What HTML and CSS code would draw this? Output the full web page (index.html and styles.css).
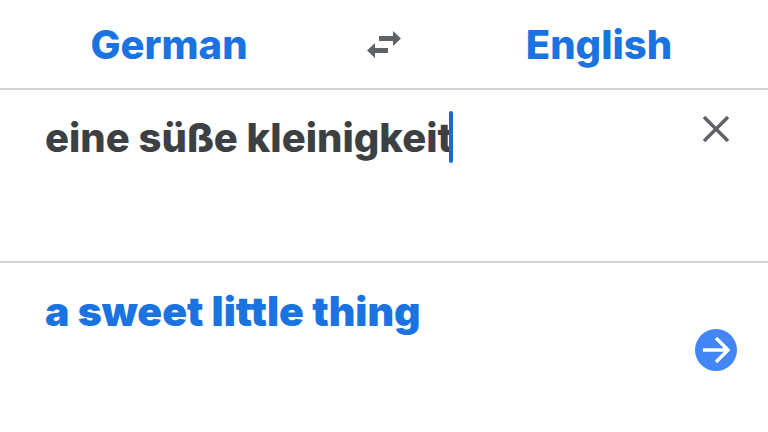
FILE: index.html
```html
<!DOCTYPE html>
<html lang="en">
<head>
  <meta charset="UTF-8">
  <meta name="viewport" content="width=device-width, initial-scale=1.0">
  <title>Translate</title>
  <link rel="stylesheet" href="styles.css">
</head>
<body>
  <header class="languages">
    <button class="language" type="button">German</button>
    <button class="icon-btn swap" type="button" aria-label="Swap languages">
      <svg width="36" height="28" viewBox="0 0 36 28">
        <path d="M27 0l8 7.500-8 7.500V10H13V5h14zM9 12v5h13v5H9v5l-8-7.500z" fill="currentColor"/>
      </svg>
    </button>
    <button class="language" type="button">English</button>
  </header>

  <main>
    <section class="source">
      <div class="source-field">
        <input class="source-text" type="text" value="eine süße kleinigkeit" aria-label="Text to translate">
        <span class="caret"></span>
      </div>
      <button class="icon-btn clear" type="button" aria-label="Clear text">
        <svg width="28" height="28" viewBox="0 0 28 28">
          <path d="M2 2l24 24M26 2L2 26" fill="none" stroke="currentColor" stroke-width="3.5"/>
        </svg>
      </button>
    </section>

    <section class="result">
      <p class="result-text">a sweet little thing</p>
      <button class="icon-btn go" type="button" aria-label="Open translation">
        <svg width="28" height="28" viewBox="0 0 28 28">
          <path d="M1 14h25M14 2l12 12-12 12" fill="none" stroke="currentColor" stroke-width="3.5"/>
        </svg>
      </button>
    </section>
  </main>
</body>
</html>
```
FILE: styles.css
```css
:root {
  --blue: #1a73e0;
  --text: #3c4043;
  --icon: #5f6368;
  --line: #d3d3d3;
}
* {
  box-sizing: border-box;
}
body {
  margin: 0;
  background: #fff;
  color: var(--text);
  font-family: Inter, "Liberation Sans", sans-serif;
  font-size: 40px;
  font-weight: 800;
  line-height: 48px;
}
button,
input {
  font: inherit;
  border: none;
  padding: 0;
  background: none;
}
button {
  cursor: pointer;
}
svg {
  display: block;
}
.languages {
  display: grid;
  grid-template-columns: 1fr 92px 1fr;
  align-items: center;
  padding: 21px 0 19px;
  border-bottom: 2px solid var(--line);
}
.language {
  color: var(--blue);
}
.icon-btn {
  display: flex;
  align-items: center;
  justify-content: center;
  flex: none;
  color: var(--icon);
}
.source,
.result {
  display: flex;
  justify-content: space-between;
  min-height: 173px;
  padding: 24px 31px 24px 45px;
}
.source {
  align-items: flex-start;
  border-bottom: 2px solid var(--line);
}
.source-field {
  position: relative;
  min-width: 0;
}
.source-text {
  display: block;
  field-sizing: content;
  max-width: 100%;
  height: 48px;
  color: var(--text);
  caret-color: transparent;
  outline: none;
}
.caret {
  position: absolute;
  top: -3px;
  right: 0;
  width: 4px;
  height: 52px;
  border-radius: 2px;
  background: #1a6bd0;
}
.clear {
  width: 42px;
  height: 30px;
}
.result {
  color: var(--blue);
}
.result-text {
  margin: 0;
  font-size: 41px;
  font-weight: 900;
}
.go {
  width: 42px;
  height: 42px;
  margin-top: 42px;
  border-radius: 50%;
  background: #4285f4;
  color: #fff;
}
```
